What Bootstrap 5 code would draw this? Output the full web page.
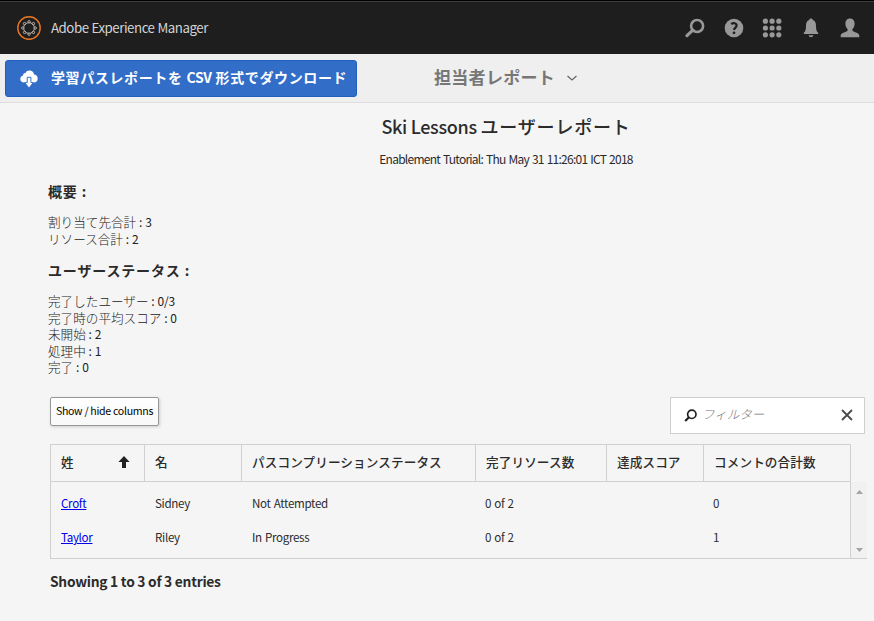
<!DOCTYPE html>
<html lang="ja">
<head>
<meta charset="utf-8">
<meta name="viewport" content="width=device-width, initial-scale=1">
<title>Adobe Experience Manager</title>
<link href="https://cdn.jsdelivr.net/npm/bootstrap@5.3.0/dist/css/bootstrap.min.css" rel="stylesheet">
<style>
body{font-family:"Noto Sans CJK JP","Noto Sans",sans-serif;background:#f5f5f5;color:#2b2b2b;font-size:13px;line-height:16.5px;overflow:hidden;height:621px}
.topbar{height:54px;background:#1e1e1e;border-top:1px solid #000;box-shadow:inset 0 1px #3c3c3c;color:#d4d4d4;padding:1px 14px 0 17px}
.brand-name{font-size:13.3px;letter-spacing:-.48px;word-spacing:.5px;margin-left:10px}
.tools{gap:18.8px;color:#989898}
.actionbar{height:49px;background:#efefef;border-bottom:1px solid #dedede;padding:6px 5px 5px}
.btn-csv{width:352px;height:37px;background:#326ec8;border:1px solid #1f5fc0;border-radius:3px;color:#fff;font-weight:700;font-size:14px;padding:0 0 0 14px;line-height:20px}
.btn-csv:hover{background:#326ec8;color:#fff}
.btn-csv .label{margin-left:13px;padding-bottom:3px;letter-spacing:.62px}
.btn-csv .latin{letter-spacing:-.3px;word-spacing:1px}
.view-title{margin-left:77px;font-size:17px;line-height:24px;font-weight:700;color:#777;padding-bottom:3px;letter-spacing:.3px}
.report-head{margin-left:138px;height:70px;padding-top:11px}
.report-head h1{font-size:18px;letter-spacing:-.3px;line-height:24px;font-weight:500;margin:0 0 12px}
.report-head .kana{letter-spacing:.8px}
.report-head p{font-size:12px;letter-spacing:-.75px;word-spacing:1px;line-height:18px;margin:0}
.summary{padding-left:48px;padding-top:8px}
.summary h2{font-size:14px;letter-spacing:.85px;line-height:20px;font-weight:700;margin:0 0 13px}
.summary .facts{font-size:12.6px;font-weight:300;color:#222;margin-bottom:13px}
.num{font-size:12px;font-weight:400;letter-spacing:-.2px;word-spacing:.6px}
.controls{margin:21px 9px 0 50px;height:37px}
.btn-cols{width:109px;height:29px;background:linear-gradient(#fff,#f8f8f8);border:1px solid #979797;border-radius:2px;box-shadow:1px 1px 3px #ccc;font-size:10.6px;letter-spacing:-.3px;line-height:16px;padding:0;color:#000;white-space:nowrap}
.filter{width:195px;height:37px;border:1px solid #cfcfcf;background:#fff;padding:0 11px 0 13px}
.filter .ph{font-size:12.5px;font-weight:300;font-style:italic;color:#777;margin-left:5px;padding-bottom:1px}
.grid{margin:10px 7px 0 50px}
.gridrow{display:grid;grid-template-columns:94px 97px 234px 131px 97px 147px}
.gridhead{width:801px;height:38px;border:1px solid #d0d0d0}
.gridhead>div{padding:0 10px;border-right:1px solid #d0d0d0;font-size:12.6px;letter-spacing:.12px;font-weight:500;line-height:33px;white-space:nowrap}
.gridhead>.sorted{padding-right:14px;padding-bottom:2px}
.gridhead>div:last-child{border-right:0}
.gridbody{height:77px;border-left:1px solid #d0d0d0;border-bottom:1px solid #d0d0d0}
.gridbody .rows{width:800px;border-right:1px solid #d0d0d0;padding-top:4px}
.gridbody .gridrow>div{padding-left:10px;line-height:34.5px;font-size:11.6px;letter-spacing:-.32px;word-spacing:.8px}
.gridbody .gridrow>div:nth-child(n+4){padding-left:9px}
.gridbody a{color:#00e}
.scroller{width:16px;background:#f1f1f1;padding:8px 0 6px}
.entries{margin:13px 0 0 50px;font-size:13.8px;letter-spacing:-.27px;font-weight:700;line-height:18px}
</style>
<script src="https://cdn.jsdelivr.net/npm/bootstrap@5.3.0/dist/js/bootstrap.bundle.min.js"></script>
</head>
<body>
<header class="topbar d-flex align-items-center justify-content-between">
  <div class="d-flex align-items-center">
    <svg width="24" height="24" viewBox="0 0 24 24" fill="none"><circle cx="12" cy="12" r="11.2" stroke="#e87722" stroke-width="1.4"/><g stroke="#d9cfc5" stroke-width=".8"><circle cx="12" cy="12" r="5.4"/><g fill="#1e1e1e"><circle cx="12" cy="5.8" r="1.2"/><circle cx="16.4" cy="7.6" r="1.2"/><circle cx="18.2" cy="12" r="1.2"/><circle cx="16.4" cy="16.4" r="1.2"/><circle cx="12" cy="18.2" r="1.2"/><circle cx="7.6" cy="16.4" r="1.2"/><circle cx="5.8" cy="12" r="1.2"/><circle cx="7.6" cy="7.6" r="1.2"/></g></g></svg>
    <span class="brand-name">Adobe Experience Manager</span>
  </div>
  <div class="tools d-flex align-items-center">
    <svg width="20" height="20" viewBox="0 0 20 20" fill="none" stroke="currentColor"><circle cx="12.1" cy="8" r="6" stroke-width="2.6"/><path d="M7.8 12.2L2 17.6" stroke-width="3.2" stroke-linecap="round"/></svg>
    <svg width="20" height="20" viewBox="0 0 20 20"><circle cx="10" cy="10" r="9.3" fill="currentColor"/><path d="M7.2 6.1c2-1.6 5.4-1.2 5.4 1.4 0 2.1-2.5 2.2-2.5 4.6" fill="none" stroke="#1e1e1e" stroke-width="2.2"/><circle cx="10" cy="14.8" r="1.4" fill="#1e1e1e"/></svg>
    <svg width="20" height="20" viewBox="0 0 20 20" fill="currentColor"><g id="dots"><circle cx="3.4" cy="3.2" r="2.6"/><circle cx="10.1" cy="3.2" r="2.6"/><circle cx="16.8" cy="3.2" r="2.6"/></g><use href="#dots" y="6.8"/><use href="#dots" y="13.6"/></svg>
    <svg width="20" height="20" viewBox="0 0 20 20" fill="currentColor"><path d="M10 .6c1 0 1.700.6 1.800 1.500 2.500.8 3.200 3 3.200 5.600 0 4 .6 5.800 2.200 7.100v1.100H2.800v-1.100C4.400 13.500 5 11.700 5 7.700c0-2.600.7-4.800 3.200-5.600C8.300 1.200 9 .6 10 .6zM7.500 17.200h5c-.5 1.300-1.400 2-2.500 2s-2-.7-2.500-2z"/></svg>
    <svg width="20" height="20" viewBox="0 0 20 20" fill="currentColor"><path d="M10 .6c3 0 4.600 2 4.600 5 0 2.500-.8 4.400-2.200 5.700v1.500c.3.900 6.900 2 6.900 4.700v1.700H.7v-1.700c0-2.700 6.600-3.800 6.900-4.700v-1.500C6.200 10 5.400 8.100 5.400 5.600c0-3 1.600-5 4.600-5z"/></svg>
  </div>
</header>
<div class="actionbar d-flex align-items-center">
  <button class="btn btn-csv d-flex align-items-center" type="button">
    <svg width="18" height="18" viewBox="0 0 18 18"><path fill="#fff" d="M4.200 12.500C1.800 12.500.3 11 .3 9c0-1.800 1.100-3.100 2.700-3.400C3 3.800 4 2.900 5.500 3 6.300 1.300 7.700.6 9.400.6c2.500 0 4.300 1.600 4.600 4 2.200.1 3.700 1.600 3.700 3.900 0 2.500-1.500 4-3.700 4z"/><path d="M7.200 7.300h3.700v5.300h2.300L9 17.400l-4.200-4.800h2.400z" fill="#fff" stroke="#326ec8"/><path d="M8 11h2.100v2.200h2.200L9 17.200l-3.300-4H8z" fill="#fff"/></svg>
    <span class="label">学習パスレポートを<span class="latin"> CSV </span>形式でダウンロード</span>
  </button>
  <div class="view-title d-flex align-items-center"><span>担当者レポート</span>
    <svg class="ms-2" width="17" height="10" viewBox="0 0 17 10"><path d="M4.500 4L9 8l4.500-4" fill="none" stroke="#666" stroke-width="1.200"/></svg></div>
</div>
<main>
  <section class="report-head text-center">
    <h1>Ski Lessons <span class="kana">ユーザーレポート</span></h1>
    <p>Enablement Tutorial: Thu May 31 11:26:01 ICT 2018</p>
  </section>
  <section class="summary">
    <h2>概要 :</h2>
    <div class="facts"><div>割り当て先合計 <span class="num">: 3</span></div><div>リソース合計 <span class="num">: 2</span></div></div>
    <h2>ユーザーステータス :</h2>
    <div class="facts mb-0"><div>完了したユーザー <span class="num">: 0/3</span></div><div>完了時の平均スコア <span class="num">: 0</span></div><div>未開始 <span class="num">: 2</span></div><div>処理中 <span class="num">: 1</span></div><div>完了 <span class="num">: 0</span></div></div>
  </section>
  <div class="controls d-flex justify-content-between">
    <button class="btn btn-cols" type="button">Show / hide columns</button>
    <div class="filter d-flex align-items-center">
      <svg width="13" height="13" viewBox="0 0 13 13" fill="none" stroke="#222"><circle cx="7.800" cy="5.300" r="4.200" stroke-width="1.700"/><path d="M5 8.300L1.200 12" stroke-width="2.200"/></svg>
      <span class="ph">フィルター</span>
      <svg class="ms-auto" width="12" height="12" viewBox="0 0 12 12"><path d="M1 1l10 10M11 1L1 11" stroke="#4b4b4b" stroke-width="1.800"/></svg>
    </div>
  </div>
  <div class="grid">
    <div class="gridrow gridhead">
      <div class="sorted d-flex align-items-center justify-content-between"><span>姓</span><svg width="12" height="12" viewBox="0 0 12 12"><path d="M6 0l5.600 6H8v6H4V6H.4z" fill="#222"/></svg></div>
      <div>名</div><div>パスコンプリーションステータス</div><div>完了リソース数</div><div>達成スコア</div><div>コメントの合計数</div>
    </div>
    <div class="gridbody d-flex">
      <div class="rows">
        <div class="gridrow"><div><a href="#">Croft</a></div><div>Sidney</div><div>Not Attempted</div><div>0 of 2</div><div></div><div>0</div></div>
        <div class="gridrow"><div><a href="#">Taylor</a></div><div>Riley</div><div>In Progress</div><div>0 of 2</div><div></div><div>1</div></div>
      </div>
      <div class="scroller d-flex flex-column align-items-center justify-content-between">
        <svg width="7" height="4" viewBox="0 0 7 4"><path d="M0 4L3.500 0 7 4z" fill="#a3a3a3"/></svg>
        <svg width="7" height="4" viewBox="0 0 7 4"><path d="M0 0l3.500 4L7 0z" fill="#a3a3a3"/></svg>
      </div>
    </div>
  </div>
  <div class="entries">Showing 1 to 3 of 3 entries</div>
</main>
</body>
</html>
